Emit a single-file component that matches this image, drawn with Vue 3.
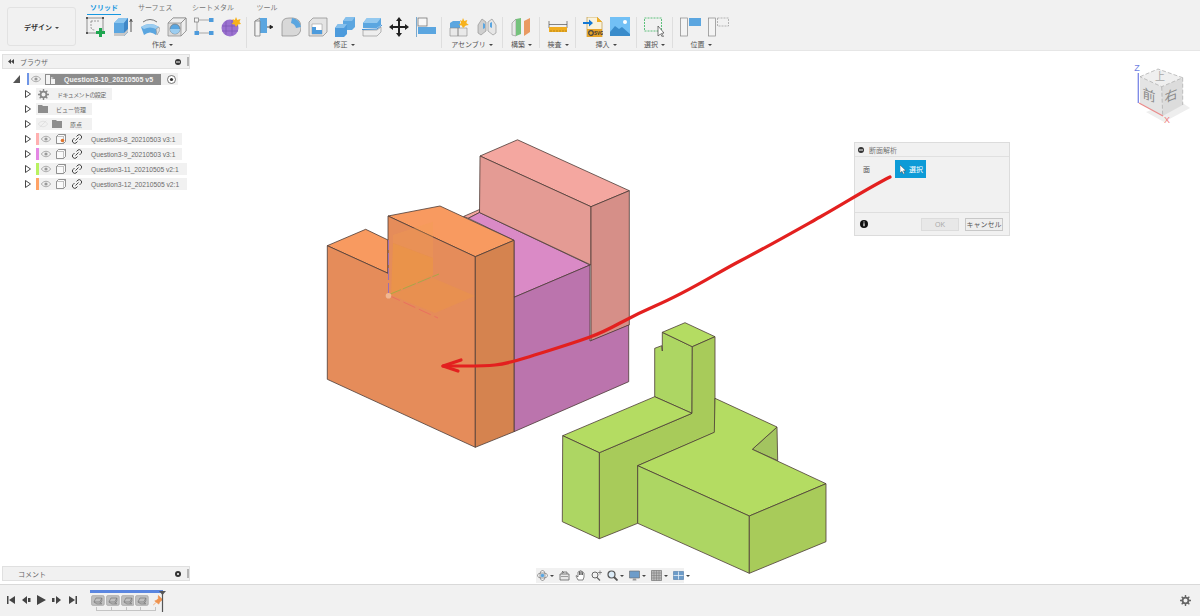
<script setup>
const tabs = [
  { name: "ソリッド", width: 34, active: true },
  { name: "サーフェス", width: 34 },
  { name: "シートメタル", width: 48 },
  { name: "ツール", width: 26 },
];

const folders = [
  { name: "ドキュメントの設定", kind: "gear", width: 76, tight: true },
  { name: "ビュー管理", kind: "folder", width: 56 },
  { name: "原点", kind: "origin", width: 56 },
];

const bodies = [
  { name: "Question3-8_20210503 v3:1", color: "#ffb0b0", width: 146, warn: true },
  { name: "Question3-9_20210503 v3:1", color: "#e487e4", width: 146 },
  { name: "Question3-11_20210505 v2:1", color: "#b9f261", width: 151 },
  { name: "Question3-12_20210505 v2:1", color: "#ffa366", width: 151 },
];

const steps = [0, 1, 2, 3];
</script>

<template>
  <div class="app">
    <header class="toolbar">
      <div class="mode"><span class="caret">デザイン</span></div>
      <div class="ribbon">
        <nav class="tabs">
          <span
            v-for="tab in tabs"
            :key="tab.name"
            class="tab"
            :class="{ active: tab.active }"
            :style="{ width: tab.width + 'px' }"
            >{{ tab.name }}</span
          >
        </nav>
        <div class="groups">
          <section class="group" style="width: 167px">
            <div class="icons">
              <svg class="icon" viewBox="0 0 20 20">
                <rect x="1" y="1" width="16" height="15" fill="none" stroke="#666" stroke-width=".7" />
                <path d="M5 4h9M5 4v6q0 3 4 3" fill="none" stroke="#777" stroke-dasharray="2 1" stroke-width=".7" />
                <path d="M0 0h2v2H0zM16 0h2v2h-2zM0 15h2v2H0z" fill="#555" />
                <path d="M13 11h3v3h3v3h-3v3h-3v-3h-3v-3h3z" fill="#1fa650" />
              </svg>
              <svg class="icon" viewBox="0 0 20 20">
                <path d="M1 6l5-5h9v14l-4 4H1z" fill="#5ba6e0" />
                <path d="M1 6l5-5h9l-4 5z" fill="#8ec6ee" />
                <path d="M11 6l4-5v14l-4 4z" fill="#3f87c7" />
                <path d="M1 16h10l4-4v3l-4 4H1z" fill="#c8c8c8" />
                <path d="M18 15V3M16.7 5L18 2l1.3 3" fill="none" stroke="#333" stroke-width=".8" />
              </svg>
              <svg class="icon" viewBox="0 0 20 20">
                <path d="M1 10q9-6 18 0l-3 8q-6-5-12 0z" fill="#5ba6e0" />
                <path d="M1 10q9-6 18 0l-3 2q-6-3-12 0z" fill="#9ccdf0" />
                <path d="M16 12l3-2 1 3-3 5z" fill="#ddd" stroke="#888" stroke-width=".5" />
                <path d="M3 5q7-5 14 0" fill="none" stroke="#555" stroke-width=".8" />
              </svg>
              <svg class="icon" viewBox="0 0 20 20">
                <path d="M1 6l5-5h13v13l-5 5H1z" fill="#d9d9d9" stroke="#888" stroke-width=".7" />
                <path d="M1 6l5-5h13l-5 5zM14 6l5-5v13l-5 5z" fill="#eee" stroke="#888" stroke-width=".7" />
                <circle cx="8" cy="12" r="5" fill="#5ba6e0" stroke="#777" stroke-width=".7" />
                <path d="M8 12h5a5 5 0 0 1-10 0z" fill="#9ccdf0" />
              </svg>
              <svg class="icon" viewBox="0 0 20 20">
                <path d="M5 3h10M5 16h10M3 5v9" stroke="#888" stroke-width=".7" />
                <rect x=".5" y="1" width="4" height="4" fill="#f5f5f5" stroke="#777" stroke-width=".7" />
                <path d="M15 1h4.500v4H15zM.5 14h4.500v4H.5zM15 14h4.500v4H15z" fill="#4d9bdc" />
              </svg>
              <svg class="icon" viewBox="0 0 20 20">
                <circle cx="9" cy="11" r="8.500" fill="#9b72d0" />
                <path d="M1 9h16M1 14h16M5 4v14M11 3v15" stroke="#7c54b4" stroke-width=".7" />
                <path d="M15 0l1.300 3L19.500 2l-1 3 1.500 2-3 .5L15 10l-1.300-2.500L10.500 7 12.500 5l-1-3 2.300 1z" fill="#f7b21c" />
              </svg>
            </div>
            <div class="label"><span class="caret">作成</span></div>
          </section>

          <section class="group" style="width: 195px">
            <div class="icons">
              <svg class="icon" viewBox="0 0 20 20">
                <path d="M1 4l5-3v15l-5 3z" fill="#e5e5e5" stroke="#777" stroke-width=".7" />
                <path d="M6 1h7v15H6z" fill="#5ba6e0" />
                <path d="M1 4h5v15H1z" fill="#f2f2f2" stroke="#777" stroke-width=".7" />
                <path d="M13 10h5M16 8.300l3 1.700-3 1.700z" fill="#222" stroke="#222" stroke-width=".8" />
              </svg>
              <svg class="icon" viewBox="0 0 20 20">
                <path d="M1 7q0-6 7-6h4q8 1 8 9 0 9-8 9H1z" fill="#d8d8d8" stroke="#888" stroke-width=".7" />
                <path d="M11 1q8 1 9 9l-5 1q-1-4-5-5z" fill="#5ba6e0" />
              </svg>
              <svg class="icon" viewBox="0 0 20 20">
                <path d="M1 5l4-4h14v14l-4 4H1z" fill="#e4e4e4" stroke="#888" stroke-width=".7" />
                <path d="M4 7h10v10H4z" fill="#fff" stroke="#888" stroke-width=".5" />
                <path d="M4 10h4v3h6v4H4z" fill="#4d9bdc" />
              </svg>
              <svg class="icon" viewBox="0 0 20 20">
                <path d="M8 4l3-4h9v10l-3 3H8z" fill="#5ba6e0" />
                <path d="M0 11l3-4h9v10l-3 3H0z" fill="#4d9bdc" />
                <path d="M3 7h9l-3 4H0zM11 0h9l-3 4H8z" fill="#86c0ec" />
              </svg>
              <svg class="icon" viewBox="0 0 20 20">
                <path d="M1 6l4-5h14v7l-4 3H1z" fill="#5ba6e0" />
                <path d="M5 1h14l-4 5H1z" fill="#94c9ef" />
                <path d="M1 13h14l4-3v5l-4 4H1z" fill="#eee" stroke="#888" stroke-width=".6" />
                <path d="M0 12.500l15-.5 5-4" fill="none" stroke="#3f90d8" stroke-width="1" />
              </svg>
              <svg class="icon" viewBox="0 0 20 20">
                <path d="M10 0l3 4h-2v5h5V7l4 3-4 3v-2h-5v5h2l-3 4-3-4h2v-5H4v2l-4-3 4-3v2h5V4H7z" fill="#222" />
              </svg>
              <svg class="icon" viewBox="0 0 20 20">
                <path d="M.5 0v20" stroke="#79a9cf" stroke-width="1" />
                <rect x="2" y="1" width="9" height="8" fill="#f7f7f7" stroke="#666" stroke-width=".7" />
                <rect x="2" y="10" width="18" height="7" fill="#5ba6e0" />
              </svg>
            </div>
            <div class="label"><span class="caret">修正</span></div>
          </section>

          <section class="group" style="width: 61px">
            <div class="icons wide">
              <svg class="icon" viewBox="0 0 20 20">
                <path d="M1 6l3-2h7v7H1z" fill="#5ba6e0" />
                <path d="M1 11h8v8H1zM9 11h9v8H9z" fill="#e9e9e9" stroke="#888" stroke-width=".6" />
                <path d="M14 1l1.300 3 3-1-1 3 2.500 2-3 .6L14 11l-1.300-2.400-3-.6L12 6l-1-3 2 1z" fill="#f7b21c" />
              </svg>
              <svg class="icon" viewBox="0 0 20 20">
                <path d="M1 8l4-6 4 3v9l-5 4-3-2z" fill="#cfcfcf" stroke="#888" stroke-width=".6" />
                <path d="M11 5l4-3 4 6v8l-3 2-5-4z" fill="#e6e6e6" stroke="#888" stroke-width=".6" />
                <path d="M6 6l2 1v4l-2 1zM13 6l2-1v6l-2-1z" fill="#5ba6e0" />
              </svg>
            </div>
            <div class="label"><span class="caret">アセンブリ</span></div>
          </section>

          <section class="group narrow" style="width: 37px">
            <div class="icons">
              <svg class="icon" viewBox="0 0 20 20">
                <path d="M1 6l4-4v17l-4-1z" fill="#e9e9e9" stroke="#888" stroke-width=".6" />
                <path d="M5 2l5-1v16l-5 2z" fill="#75c27c" />
                <path d="M13 4l6-3v14l-6 4z" fill="#e99a62" />
              </svg>
            </div>
            <div class="label"><span class="caret">構築</span></div>
          </section>

          <section class="group narrow" style="width: 36px">
            <div class="icons">
              <svg class="icon" viewBox="0 0 20 20">
                <path d="M1 4v7M19 4v7M1 7.500h18" fill="none" stroke="#555" stroke-width=".7" />
                <path d="M1 10h18v5H1z" fill="#f0ad21" />
                <path d="M3 13v2M6 13v2M9 13v2M12 13v2M15 13v2M18 13v2" stroke="#8a6412" stroke-width=".5" />
              </svg>
            </div>
            <div class="label"><span class="caret">検査</span></div>
          </section>

          <section class="group" style="width: 61px">
            <div class="icons">
              <svg class="icon" viewBox="0 0 20 20">
                <path d="M4 0h10l5 5v15H4z" fill="#f9f2dc" stroke="#b58a29" stroke-width=".6" />
                <path d="M14 0l5 5h-5z" fill="#f0ad21" />
                <path d="M4 12h15v8H4z" fill="#e5a42a" />
                <circle cx="8" cy="16" r="2.300" fill="none" stroke="#444" stroke-width="1.200" />
                <text x="11" y="18" class="tiny">SVG</text>
                <path d="M0 5h6V2.500L10 6l-4 3.500V7H0z" fill="#1478d4" />
              </svg>
              <svg class="icon" viewBox="0 0 20 20">
                <rect width="20" height="19" fill="#72c0f5" />
                <circle cx="15" cy="5" r="2" fill="#fff" />
                <path d="M0 15l5-6 4 3 3-2 8 7v2H0z" fill="#3a8ccb" />
              </svg>
            </div>
            <div class="label"><span class="caret">挿入</span></div>
          </section>

          <section class="group" style="width: 36px">
            <div class="icons">
              <svg class="icon" viewBox="0 0 20 20">
                <rect x=".5" y="1" width="17" height="13" fill="none" stroke="#5cc07b" stroke-dasharray="2 1" />
                <path d="M14 9v10l2.500-2 2 3 1-.6-2-3 2.500-.4z" fill="#fff" stroke="#444" stroke-width=".7" />
              </svg>
            </div>
            <div class="label"><span class="caret">選択</span></div>
          </section>

          <section class="group last">
            <div class="icons">
              <svg class="icon" viewBox="0 0 21 20">
                <rect x=".5" y="1" width="7" height="18" fill="#f4f4f4" stroke="#888" stroke-width=".7" />
                <rect x="9" y="1" width="12" height="8" fill="#5ba6e0" />
              </svg>
              <svg class="icon" viewBox="0 0 21 20">
                <rect x=".5" y="1" width="7" height="18" fill="#f4f4f4" stroke="#888" stroke-width=".7" />
                <rect x="9.500" y="1" width="11" height="8" fill="none" stroke="#999" stroke-dasharray="2 1" stroke-width=".7" />
              </svg>
            </div>
            <div class="label"><span class="caret">位置</span></div>
          </section>
        </div>
      </div>
    </header>

    <main class="viewport">
      <svg class="scene" viewBox="0 51 1200 533">
        <g stroke="#4b3b36" stroke-width=".8" stroke-linejoin="round">
          <!-- pink part -->
          <path d="M463.500 216.500L479.500 209.500V212.500L468.300 218.300z" fill="#f4a7a0" />
          <path d="M480 156L517.500 139.800 629.300 190.700 591 206.700z" fill="#f4a7a0" />
          <!-- purple part -->
          <path d="M468.300 218.300L479.500 212.500 590 265 514 297.300V240.300z" fill="#da8ac6" />
          <path d="M480 156L591 206.700V265L479.500 212.500z" fill="#e49b94" />
          <path d="M591 206.700L629.300 190.700V325L591 341z" fill="#d68f88" />
          <path d="M514 297.300L590 265V341L628.700 325V381.700L514 431.700z" fill="#bb74ad" />
          <!-- orange part -->
          <path d="M327.300 245.700L365.700 229.300 388 240V273.300z" fill="#f89a60" />
          <path d="M388 216L440 206 514 240.300 475.300 256.700z" fill="#f89a60" />
          <path d="M327.300 245.700L388 273.300V216L475.300 256.700V447.300L327.300 379.300z" fill="#e58c5a" />
          <path d="M475.300 256.700L514 240.300V431.700L475.300 447.300z" fill="#d5834f" />
          <!-- green part -->
          <path d="M654.700 348.300L661.700 345.700 662.300 351V332.300L692.300 346.700 692 413.300 654.700 396.700z" fill="#add663" />
          <path d="M662.300 332.300L685 322.700 715 336.700 692.300 346.700z" fill="#b4dc62" />
          <path d="M692.300 346.700L715 336.700V432.300L637.700 465.700V523.300L599.300 538.700V452.700L692 413.300z" fill="#a8cb5a" />
          <path d="M562.700 435.700L654.700 396.700 692 413.300 599.300 452.700z" fill="#b4dc62" />
          <path d="M562.700 435.700L599.300 452.700V538.700L562.300 521.700z" fill="#add663" />
          <path d="M752.300 449.300L777 427 777.700 460.700z" fill="#a3c460" />
          <path d="M715 398.300L777 427 752.300 449.300 826 483.700 749.300 516 637.700 465.700 714.300 432.300z" fill="#b4dc62" />
          <path d="M637.700 465.700L749.300 516V573.300L637.700 523.300z" fill="#add663" />
          <path d="M749.300 516L826 483.700V541.700L749.300 573.300z" fill="#a8cb5a" />
        </g>

        <!-- origin planes and axes -->
        <g>
          <path d="M393 235L433 221.700V258L393 243z" fill="#f2a050" opacity=".3" />
          <path d="M393 243L433 258V275L391 295z" fill="#f09a3a" opacity=".5" />
          <path d="M391 295L433 278 475 296 435 313z" fill="#f09a3a" opacity=".3" />
          <path d="M388 295L439 274" stroke="#a9a845" stroke-width="1" stroke-dasharray="14 2" />
          <path d="M388 295L438 318" stroke="#ea705f" stroke-width="1" stroke-dasharray="13 4" />
          <path d="M388.500 295V240" stroke="#9d6db0" stroke-width="1" stroke-dasharray="12 3" />
          <circle cx="388.500" cy="295.700" r="2.800" fill="#f2b792" />
        </g>

        <!-- view cube -->
        <g>
          <path d="M1146 112L1164 122 1190 108 1178 100z" fill="#eee" />
          <path d="M1140 76.700L1158 69 1182.700 77.700 1161.700 86.700z" fill="#efefef" />
          <path d="M1140 76.700L1161.700 86.700 1162.700 116 1140 103.300z" fill="#e4e4e4" />
          <path d="M1161.700 86.700L1182.700 77.700V105L1162.700 116z" fill="#dcdcdc" />
          <path d="M1140 76.700L1158 69 1182.700 77.700 1161.700 86.700zM1161.700 86.700L1162.700 116M1182.700 77.700V105" fill="none" stroke="#a8a8a8" stroke-width=".7" stroke-dasharray="4 2" />
          <text class="cube" x="1149" y="100" transform="skewY(22)" style="transform-origin: 1149px 96px">前</text>
          <text class="cube" x="1171" y="100" transform="skewY(-22)" style="transform-origin: 1171px 96px">右</text>
          <text class="cube small" x="1160" y="80">上</text>
          <path d="M1138.300 103V73" stroke="#7a86e6" stroke-width="1.300" />
          <path d="M1139 103L1163 116" stroke="#ea8b8b" stroke-width="1.300" />
          <text class="axis" x="1137" y="71" fill="#6f7fe2">Z</text>
          <text class="axis" x="1167" y="123" fill="#ee8080">X</text>
        </g>
      </svg>

      <aside class="panel browser">
        <div class="panel-head">
          <svg width="6" height="5" viewBox="0 0 6 5"><path d="M3 0v5L0 2.500zM6 0v5L3 2.500z" fill="#444" /></svg>
          <span class="panel-title">ブラウザ</span>
          <svg class="panel-btn" width="6" height="6" viewBox="0 0 6 6"><circle cx="3" cy="3" r="3" fill="#333" /><path d="M1 3h4" stroke="#fff" /></svg>
          <i class="grip"></i>
        </div>
        <div class="tree">
          <div class="row root">
            <svg class="corner" width="7" height="8" viewBox="0 0 7 8"><path d="M7 0v8H0z" fill="#555" /></svg>
            <i class="bar" style="background: #6f95e6"></i>
            <div class="root-body">
              <svg width="10" height="8" viewBox="0 0 12 10"><path d="M0 5q6-7 12 0-6 7-12 0z" fill="none" stroke="#999" /><circle cx="6" cy="5" r="2" fill="#999" /></svg>
              <div class="root-name">
                <svg width="11" height="11" viewBox="0 0 11 11"><path d="M1 1h4v9H1zM6 5h4v5H6z" fill="#f3f3f3" /><path d="M6 3l3 1-3 1z" fill="#ddd" /></svg>
                <span>Question3-10_20210505 v5</span>
              </div>
              <svg class="radio" width="9" height="9" viewBox="0 0 9 9"><circle cx="4.500" cy="4.500" r="4" fill="#fff" stroke="#555" stroke-width=".8" /><circle cx="4.500" cy="4.500" r="1.600" fill="#333" /></svg>
            </div>
          </div>

          <div v-for="item in folders" :key="item.name" class="row">
            <svg class="expander" width="6" height="8" viewBox="0 0 6 8"><path d="M.5.500L5.500 4 .5 7.500z" fill="#fff" stroke="#333" stroke-width=".9" /></svg>
            <div class="node" :style="{ width: item.width + 'px' }">
              <svg v-if="item.kind === 'gear'" class="gear" width="11" height="11" viewBox="0 0 12 12">
                <circle cx="6" cy="6" r="3.200" fill="none" stroke="#888" stroke-width="2" />
                <path d="M6 0v2.500M6 9.500V12M0 6h2.500M9.500 6H12M1.800 1.800l1.800 1.800M8.400 8.400l1.800 1.800M1.800 10.200l1.800-1.800M8.400 3.600l1.800-1.800" stroke="#888" stroke-width="1.500" />
              </svg>
              <svg v-if="item.kind === 'origin'" class="off" width="10" height="8" viewBox="0 0 12 10">
                <path d="M0 5q6-7 12 0-6 7-12 0zM2 9l8-8" fill="none" stroke="#ddd" />
              </svg>
              <svg v-if="item.kind !== 'gear'" class="folder" width="10" height="8" viewBox="0 0 10 8">
                <path d="M0 0h4l1 1h5v7H0z" fill="#8d8d8d" />
              </svg>
              <span class="node-text" :class="{ tight: item.tight }">{{ item.name }}</span>
            </div>
          </div>

          <div v-for="body in bodies" :key="body.name" class="row">
            <svg class="expander" width="6" height="8" viewBox="0 0 6 8"><path d="M.5.500L5.500 4 .5 7.500z" fill="#fff" stroke="#333" stroke-width=".9" /></svg>
            <div class="node body" :style="{ width: body.width + 'px' }">
              <i class="bar" :style="{ background: body.color }"></i>
              <svg width="10" height="8" viewBox="0 0 12 10"><path d="M0 5q6-7 12 0-6 7-12 0z" fill="none" stroke="#999" /><circle cx="6" cy="5" r="2" fill="#999" /></svg>
              <svg class="cubelet" width="10" height="10" viewBox="0 0 10 10">
                <path d="M.5 2.500L2.500.5h7v7l-2 2h-7z" fill="#fafafa" stroke="#666" stroke-width=".7" />
                <path d="M.5 2.500h7v7M7.500 2.500l2-2" fill="none" stroke="#888" stroke-width=".5" />
                <circle v-if="body.warn" cx="6.500" cy="6.500" r="1.800" fill="#e2762e" />
              </svg>
              <svg class="chain" width="10" height="10" viewBox="0 0 10 10">
                <path d="M4.500 2.500L6 1q1.500-1 3 .5t0 3L7.500 6M5.500 7.500L4 9q-1.500 1-3-.5t0-3L2.500 4M3.500 6.500l3-3" fill="none" stroke="#444" stroke-width="1" />
              </svg>
              <span class="body-text">{{ body.name }}</span>
            </div>
          </div>
        </div>
      </aside>

      <aside class="panel comments">
        <div class="panel-head">
          <span class="panel-title indent">コメント</span>
          <svg class="panel-btn" width="6" height="6" viewBox="0 0 6 6"><circle cx="3" cy="3" r="3" fill="#333" /><circle cx="3" cy="3" r="1" fill="#fff" /></svg>
          <i class="grip"></i>
        </div>
      </aside>

      <section class="dialog">
        <div class="dialog-head">
          <svg width="6" height="6" viewBox="0 0 6 6"><circle cx="3" cy="3" r="3" fill="#333" /><path d="M1 3h4" stroke="#fff" /></svg>
          <span>断面解析</span>
        </div>
        <div class="dialog-body">
          <span class="field">面</span>
          <button class="pick">
            <svg width="6" height="9" viewBox="0 0 6 9"><path d="M0 0v8l2-1.700L3.300 9l1.400-.6-1.300-2.600H6z" fill="#fff" stroke="#333" stroke-width=".4" /></svg>
            選択
          </button>
        </div>
        <div class="dialog-foot">
          <svg width="8" height="8" viewBox="0 0 8 8"><circle cx="4" cy="4" r="4" fill="#111" /><path d="M4 3.300v3M4 1.500v1" stroke="#fff" stroke-width="1.200" /></svg>
          <button class="btn off">OK</button>
          <button class="btn">キャンセル</button>
        </div>
      </section>

      <!-- hand drawn arrow, it runs over the dialog too -->
      <svg class="scribble" viewBox="0 51 1200 533">
        <path
          d="M890 177C868 188 845 203 820 217S765 248 740 261 690 291 655 306 615 328 590 337 550 350 525 358 490 366 465 366L443 366"
          fill="none"
          stroke="#e3201f"
          stroke-width="3.200"
          stroke-linecap="round"
        />
        <path d="M461 360L443 366 458 371" fill="none" stroke="#e3201f" stroke-width="3.200" stroke-linecap="round" stroke-linejoin="round" />
      </svg>

      <div class="navbar">
        <svg class="nav-icon" viewBox="0 0 11 11">
          <ellipse cx="5.500" cy="5.500" rx="5" ry="2.500" fill="none" stroke="#777" stroke-width=".7" />
          <ellipse cx="5.500" cy="5.500" rx="2.500" ry="5" fill="none" stroke="#777" stroke-width=".7" />
          <circle cx="5.500" cy="5.500" r="1.800" fill="#5ba6e0" />
        </svg>
        <i class="nav-caret"></i>
        <svg class="nav-icon" viewBox="0 0 11 11">
          <path d="M1 4h9v6H1zM3 4V2h5v2M3 1l2 2" fill="#e7e7e7" stroke="#666" stroke-width=".8" />
          <path d="M2 6.500h7" stroke="#888" stroke-width=".8" />
        </svg>
        <svg class="nav-icon" viewBox="0 0 11 11">
          <path d="M3 10L1 6q0-1 1 0l1 1V2q1-1 1.500 0v3-4q1-1 1.500 0v4-3.500q1-1 1.500 0V5V3q1-1 1.500 0v4l-1 3z" fill="#fff" stroke="#555" stroke-width=".7" />
        </svg>
        <svg class="nav-icon" viewBox="0 0 11 11">
          <circle cx="4" cy="5" r="3" fill="none" stroke="#666" />
          <path d="M6 7.500L9 10.500" stroke="#666" stroke-width="1.200" />
          <path d="M9 .5v4M7 2.500h4" stroke="#666" stroke-width=".7" />
        </svg>
        <svg class="nav-icon" viewBox="0 0 11 11">
          <circle cx="4.500" cy="4.500" r="3.500" fill="#dcecf8" stroke="#555" stroke-width="1.200" />
          <path d="M7 7l3.500 3.500" stroke="#555" stroke-width="1.800" />
        </svg>
        <i class="nav-caret"></i>
        <svg class="nav-icon" viewBox="0 0 11 11">
          <path d="M.5 1h10v7H.5z" fill="#6d9cc9" stroke="#666" stroke-width=".6" />
          <path d="M4 8.500h3l.5 2h-4z" fill="#999" />
        </svg>
        <i class="nav-caret"></i>
        <svg class="nav-icon" viewBox="0 0 11 11">
          <path d="M.5.500h10v10H.5z" fill="#bbb" stroke="#666" stroke-width=".6" />
          <path d="M3 .5v10M5.500.5v10M8 .5v10M.5 3h10M.5 5.500h10M.5 8h10" stroke="#777" stroke-width=".5" />
        </svg>
        <i class="nav-caret"></i>
        <svg class="nav-icon" viewBox="0 0 11 11">
          <path d="M.5 1.500h10v8H.5z" fill="#6d9cc9" stroke="#4f7ba8" stroke-width=".6" />
          <path d="M5.500 1.500v8M.5 5.500h10" stroke="#e8f0f8" stroke-width=".8" />
        </svg>
        <i class="nav-caret"></i>
      </div>
    </main>

    <footer class="timeline">
      <svg class="transport" width="72" height="10" viewBox="0 0 72 10">
        <path d="M1 1h1.500v8H1zM9 1v8L3 5zM16 5l5-4v8zM22 3h2.500v4H22zM31 0l9 5-9 5zM46 3h2.500v4H46zM50 1l5 4-5 4zM63 1l6 4-6 4zM69.500 1H71v8h-1.500z" fill="#444" />
      </svg>
      <div class="steps">
        <i class="progress"></i>
        <div class="step-row">
          <svg v-for="n in steps" :key="n" class="step" width="14" height="11" viewBox="0 0 14 11">
            <rect x=".5" y=".5" width="13" height="10" rx="1.500" fill="#bfbfbf" stroke="#a0a0a0" stroke-width=".6" />
            <path d="M3 7l2-4h6L9 7zM3 7l3 2h5l-2-2M11 3v3l-2 3" fill="none" stroke="#777" stroke-width=".7" />
          </svg>
          <svg class="pin" width="10" height="11" viewBox="0 0 11 11">
            <path d="M6 0l5 5-2 .5-2 2.500-.5 1.500L2 6l1.500-.5L6 3.500zM3.500 7.500L0 11" fill="#ef934f" stroke="#ef934f" stroke-width=".8" />
          </svg>
        </div>
        <div class="ticks">
          <i v-for="n in steps" :key="n"></i>
        </div>
        <svg class="marker" width="7" height="21" viewBox="0 0 7 21"><path d="M0 0h7L3.500 4z" fill="#555" /><path d="M3.500 2v19" stroke="#555" stroke-width="1.200" /></svg>
      </div>
      <svg class="settings" width="11" height="11" viewBox="0 0 12 12">
        <circle cx="6" cy="6" r="3.200" fill="none" stroke="#666" stroke-width="2" />
        <path d="M6 0v2.500M6 9.500V12M0 6h2.500M9.500 6H12M1.800 1.800l1.800 1.800M8.400 8.400l1.800 1.800M1.800 10.200l1.800-1.800M8.400 3.600l1.800-1.800" stroke="#666" stroke-width="1.500" />
      </svg>
    </footer>
  </div>
</template>

<style scoped>
.app {
  width: 1200px;
  height: 616px;
  display: flex;
  flex-direction: column;
  overflow: hidden;
  background-color: #fff;
  color: #555;
  font-family: "Liberation Sans", "Noto Sans CJK JP", sans-serif;
  font-size: 7px;
}
.toolbar {
  height: 51px;
  flex: none;
  box-sizing: border-box;
  display: flex;
  padding-left: 7px;
  background-color: #f1f1f1;
  border-bottom: 1px solid #e6e6e6;
}
.mode {
  width: 69px;
  height: 39px;
  margin-top: 7px;
  box-sizing: border-box;
  display: flex;
  align-items: center;
  justify-content: center;
  border: 1px solid #e2e2e2;
  border-radius: 3px;
  color: #333;
  font-weight: 700;
}
.caret::after {
  content: "";
  display: inline-block;
  margin-left: 3px;
  vertical-align: 1px;
  border-left: 2px solid transparent;
  border-right: 2px solid transparent;
  border-top: 2.500px solid #444;
}
.ribbon {
  display: flex;
  flex-direction: column;
  margin-left: 4px;
}
.tabs {
  height: 17px;
  display: flex;
  gap: 17px;
  padding-left: 7px;
}
.tab {
  height: 15px;
  box-sizing: border-box;
  padding-top: 2px;
  text-align: center;
  white-space: nowrap;
  color: #777;
}
.tab.active {
  color: #1697e0;
  font-weight: 700;
  border-bottom: 1.500px solid #1697e0;
}
.groups {
  display: flex;
  height: 31px;
}
.group {
  box-sizing: border-box;
  display: flex;
  flex-direction: column;
  padding-left: 7px;
  border-right: 1px solid #dedede;
}
.group:first-child {
  padding-left: 6px;
}
.group.narrow {
  padding-left: 8px;
}
.group.last {
  border-right: none;
}
.icons {
  height: 20px;
  display: flex;
  gap: 7px;
}
.icons.wide {
  gap: 8px;
}
.icon {
  width: 20px;
  height: 20px;
  flex: none;
}
.group.last .icon {
  width: 21px;
}
.tiny {
  font-size: 4.500px;
  font-weight: 700;
  fill: #333;
}
.label {
  margin-top: 2px;
  margin-left: -7px;
  text-align: center;
  white-space: nowrap;
  color: #555;
}
.viewport {
  flex: 1;
  position: relative;
  overflow: hidden;
}
.scene,
.scribble {
  position: absolute;
  left: 0;
  top: 0;
  width: 1200px;
  height: 533px;
}
.scribble {
  pointer-events: none;
}
.cube {
  font-size: 13px;
  fill: #8a8a8a;
  text-anchor: middle;
  font-family: "Noto Sans CJK JP", sans-serif;
}
.cube.small {
  font-size: 10px;
  fill: #a8a8a8;
}
.axis {
  font-size: 9px;
  text-anchor: middle;
  font-family: "Liberation Sans", sans-serif;
}
.panel {
  position: absolute;
  left: 2px;
  width: 188px;
}
.browser {
  top: 3px;
}
.comments {
  bottom: 3px;
}
.panel-head {
  height: 15px;
  box-sizing: border-box;
  display: flex;
  align-items: center;
  padding-left: 5px;
  background-color: #f1f1f1;
  border: 1px solid #e0e0e0;
}
.panel-title {
  margin-left: 6px;
  color: #666;
}
.panel-title.indent {
  margin-left: 10px;
}
.panel-btn {
  margin-left: auto;
  margin-right: 6px;
}
.grip {
  width: 2px;
  height: 9px;
  background-color: #b5b5b5;
}
.tree {
  margin-top: 4px;
  display: flex;
  flex-direction: column;
  gap: 3px;
}
.row {
  height: 12px;
  display: flex;
  align-items: center;
  padding-left: 23px;
}
.row.root {
  padding-left: 11px;
}
.corner {
  flex: none;
}
.expander {
  flex: none;
  margin-right: 5px;
}
.bar {
  width: 3px;
  height: 12px;
  flex: none;
}
.row.root .bar {
  margin-left: 7px;
  width: 2px;
}
.root-body {
  width: 147px;
  height: 12px;
  display: flex;
  align-items: center;
  gap: 4px;
  padding-left: 2px;
  background-color: #f1f1f1;
}
.root-name {
  width: 116px;
  height: 11px;
  display: flex;
  align-items: center;
  gap: 8px;
  background-color: #8c8c8c;
  color: #f4f4f4;
  font-weight: 700;
  white-space: nowrap;
}
.radio {
  margin-left: 2px;
}
.node {
  height: 12px;
  display: flex;
  align-items: center;
  background-color: #f1f1f1;
  white-space: nowrap;
  color: #666;
}
.gear {
  margin-left: 2px;
}
.folder {
  margin-left: 2px;
}
.off {
  margin-left: 2px;
  margin-right: 2px;
}
.node-text {
  margin-left: 8px;
  font-size: 6px;
}
.node-text.tight {
  letter-spacing: -0.6px;
}
.node.body svg:first-of-type {
  margin-left: 2px;
}
.cubelet {
  margin-left: 5px;
}
.chain {
  margin-left: 6px;
}
.body-text {
  margin-left: 9px;
  color: #6a6a6a;
  font-size: 6.700px;
}
.dialog {
  position: absolute;
  left: 854px;
  top: 91px;
  width: 156px;
  height: 94px;
  box-sizing: border-box;
  display: flex;
  flex-direction: column;
  background-color: #f1f1f1;
  border: 1px solid #dcdcdc;
}
.dialog-head {
  height: 13px;
  flex: none;
  display: flex;
  align-items: center;
  gap: 5px;
  padding-left: 3px;
  border-bottom: 1px solid #e0e0e0;
  color: #777;
}
.dialog-body {
  flex: 1;
  display: flex;
  align-items: flex-start;
  padding: 3px 0 0 8px;
}
.field {
  margin-top: 4px;
  width: 32px;
  color: #555;
}
.pick {
  width: 31px;
  height: 18px;
  display: flex;
  align-items: center;
  gap: 3px;
  padding: 0 0 0 5px;
  border: none;
  background-color: #0d9bd7;
  color: #fff;
  font: inherit;
}
.dialog-foot {
  height: 23px;
  flex: none;
  box-sizing: border-box;
  display: flex;
  align-items: center;
  gap: 6px;
  padding: 0 6px 0 5px;
  border-top: 1px solid #dedede;
}
.btn {
  width: 38px;
  height: 13px;
  margin: 0;
  padding: 0;
  box-sizing: border-box;
  background-color: #eee;
  border: 1px solid #c8c8c8;
  color: #555;
  font: inherit;
}
.btn.off {
  margin-left: auto;
  background-color: #e8e8e8;
  border-color: #dcdcdc;
  color: #aaa;
}
.navbar {
  position: absolute;
  left: 536px;
  bottom: 1px;
  width: 148px;
  height: 15px;
  box-sizing: border-box;
  display: flex;
  align-items: center;
  gap: 5px;
  padding-left: 1px;
  background-color: #f1f1f1;
}
.nav-icon {
  width: 11px;
  height: 11px;
  flex: none;
}
.nav-caret {
  flex: none;
  margin-left: -3px;
  border-left: 2px solid transparent;
  border-right: 2px solid transparent;
  border-top: 2.500px solid #444;
}
.timeline {
  height: 32px;
  flex: none;
  box-sizing: border-box;
  display: flex;
  align-items: flex-start;
  padding-left: 6px;
  background-color: #f1f1f1;
  border-top: 1px solid #d9d9d9;
}
.transport {
  margin-top: 10px;
}
.steps {
  position: relative;
  width: 73px;
  margin-left: 12px;
  padding-top: 5px;
}
.progress {
  display: block;
  height: 3px;
  background-color: #5b86e0;
}
.step-row {
  display: flex;
  gap: 1px;
  margin-top: 2px;
  padding-left: 1px;
}
.pin {
  margin-left: 3px;
}
.ticks {
  display: flex;
  margin: 1px 0 0 6px;
  width: 60px;
  height: 4px;
  box-sizing: border-box;
  border-right: 1px solid #c4c4c4;
  border-bottom: 1px solid #c4c4c4;
}
.ticks i {
  flex: 1;
  border-left: 1px solid #c4c4c4;
}
.marker {
  position: absolute;
  right: -3px;
  top: 6px;
}
.settings {
  margin-left: auto;
  margin-top: 10px;
  margin-right: 9px;
}
</style>

<style>
html,
body {
  margin: 0;
  background-color: #fff;
}
</style>
